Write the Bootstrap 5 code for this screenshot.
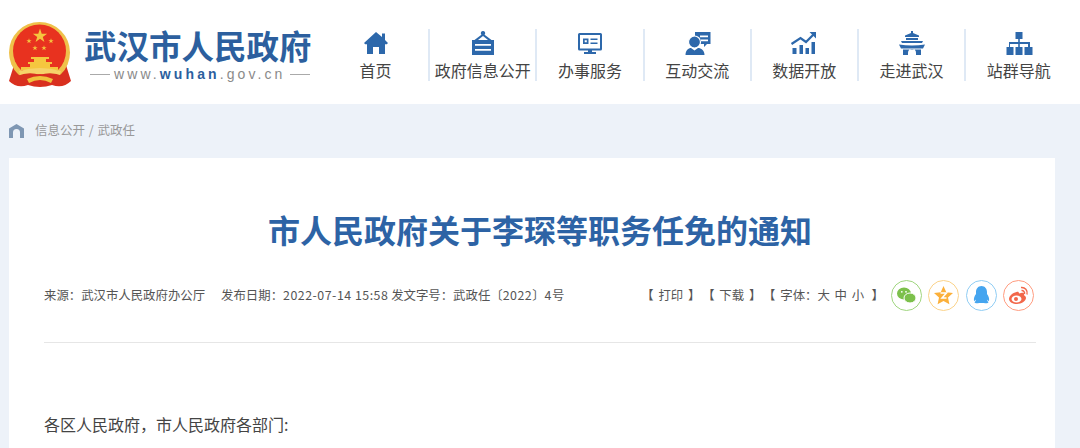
<!DOCTYPE html>
<html lang="zh">
<head>
<meta charset="utf-8">
<title>市人民政府关于李琛等职务任免的通知</title>
<link href="https://cdn.jsdelivr.net/npm/bootstrap@5.3.0/dist/css/bootstrap.min.css" rel="stylesheet">
<style>
html,body{height:448px;overflow:hidden}
body{background:#edf2f9;font-family:"Liberation Sans","Noto Sans CJK SC",sans-serif;color:#444}
.site-head{height:104px;background:#fff;padding-left:9px}
.brand-wrap{width:313px;height:104px}
.emblem{width:62px;height:67px;margin-top:21px;flex:none}
.brand-text{margin-left:13px;margin-top:24px}
.brand-name{font:700 32.5px/42px "Noto Sans CJK SC",sans-serif;color:#2c5f9e;white-space:nowrap}
.brand-url{display:flex;align-items:center;justify-content:center;gap:4px;font:400 14px/16px "Liberation Sans",sans-serif;letter-spacing:3.1px;color:#8a8a8a;margin-left:4px;white-space:nowrap}
.brand-url b{color:#2c5f9e;font-weight:700}
.brand-url i{display:block;width:20px;height:1px;background:#aaa}
.mainnav{margin-left:1px;padding-top:29px}
.nav-cell{width:107.2px;height:52px;border-right:2px solid #dfe9f5;text-align:center;color:#444;font:400 16px/20px "Noto Sans CJK SC",sans-serif;white-space:nowrap;text-decoration:none;display:block}
.nav-cell:last-child{border-right-color:transparent}
.nav-cell svg{display:block;width:28px;height:26px;margin:0 auto 5px;fill:#2d68ab}
.crumbs{height:53px;padding-left:9px;font:400 12.5px/1 "Noto Sans CJK SC",sans-serif;color:#999;word-spacing:1px}
.crumbs svg{width:15px;height:14px;fill:#7f97b3;margin-right:11px}
.sheet{background:#fff;margin:1px 25px 0 9px;padding:0 19px 0 35px;height:300px}
.doc-title{font:700 32px/40px "Noto Sans CJK SC",sans-serif;color:#2d63a5;text-align:center;padding-top:51px;margin:0;box-sizing:content-box;height:40px}
.meta-row{height:63px;margin-top:31px;border-bottom:1px solid #e6e6e6;font:400 12.4px/18px "Noto Sans CJK SC",sans-serif;color:#555;white-space:nowrap}
.meta-text{padding-top:6px}
.meta-text .num{letter-spacing:.5px}
.tools{word-spacing:2px}
.tools span{margin-right:8px}
.tools span:last-child{margin-right:1px}
.share-set{margin-right:2px}
.share{width:31px;height:31px;border-radius:50%;border:1px solid;display:flex;align-items:center;justify-content:center;margin-left:6.3px;background:#fff}
.share svg{width:21px;height:21px}
.s-green{border-color:#a0d67f}.s-gold{border-color:#fbd38a}.s-blue{border-color:#90cdf4}.s-red{border-color:#ff9c7f}
.greeting{font:400 16px/24px "Noto Sans CJK SC",sans-serif;color:#444;margin:69px 0 0}
</style>
</head>
<body>
<header class="site-head d-flex">
  <div class="brand-wrap d-flex">
    <svg class="emblem" viewBox="0 0 62 67">
      <defs><path id="st" d="M0-1 .23-.31H.95L.37.12 .59.81 0 .38-.59.81-.37.12-.95-.31H-.23z"/></defs>
      <path d="M5 44 L0 60 Q8 68 19 64 Q31 68 43 64 Q54 68 62 60 L57 44Z" fill="#d9301f"/>
      <circle cx="30.500" cy="31.500" r="30.500" fill="#efc14a"/>
      <circle cx="30.500" cy="30" r="26.500" fill="#e8321f"/>
      <g fill="#f5c63f">
        <use href="#st" transform="translate(31 15) scale(7.500)"/>
        <use href="#st" transform="translate(20 20) scale(2.800)"/>
        <use href="#st" transform="translate(42 20) scale(2.800)"/>
        <use href="#st" transform="translate(26 27) scale(2.800)"/>
        <use href="#st" transform="translate(35 27) scale(2.800)"/>
        <path d="M22 36H40V38H37V41H25V38H22zM19 41H43V43H41V46H21V43H19z"/>
        <path d="M12 46h37v3H12z"/>
      </g>
      <path d="M10 50Q31 44 52 50L50 56Q31 50 12 56Z" fill="#f6d36a"/>
      <path d="M8 55Q20 50 31 54Q42 50 54 55L53 64Q42 60 31 65Q20 60 9 64Z" fill="#d9301f"/>
      <path d="M18 58Q31 52 44 58L42 62Q31 56 20 62Z" fill="#f0c23d"/>
    </svg>
    <div class="brand-text">
      <div class="brand-name">武汉市人民政府</div>
      <div class="brand-url"><i></i><span>www.<b>wuhan</b>.gov.cn</span><i></i></div>
    </div>
  </div>
  <nav class="mainnav d-flex">
    <a class="nav-cell" href="#"><svg viewBox="0 0 28 26"><path d="M14 3 20 8V4.500h3v6.500l3 3-1.200 1.300H23V25h-6v-7h-6v7H5v-9.700H3.200L2 14z"/></svg>首页</a>
    <a class="nav-cell" href="#"><svg viewBox="0 0 28 26"><path fill-rule="evenodd" d="M14 2a2.200 2.200 0 0 1 1.600 3.700L22.500 11H25V26H3V11h2.500l6.900-5.300A2.200 2.200 0 0 1 14 2zM14 7 9 11H19zM6 15v1.800H22V15zM6 20v1.800H22V20z"/></svg>政府信息公开</a>
    <a class="nav-cell" href="#"><svg viewBox="0 0 28 26"><path fill-rule="evenodd" d="M3.500 4H24.500A1.500 1.500 0 0 1 26 5.500V20a1.500 1.500 0 0 1-1.500 1.500H16V23h4v2H8V23h4V21.500H3.500A1.500 1.500 0 0 1 2 20V5.500A1.500 1.500 0 0 1 3.500 4zM4 6V19.500H24V6zM7 9.500h5.500V15H7zM8.700 11.200v2H10.800v-2zM14.500 9.500H21.500V11H14.500zM14.500 13.500H21.500V15H14.500z"/></svg>办事服务</a>
    <a class="nav-cell" href="#"><svg viewBox="0 0 28 26"><path fill-rule="evenodd" d="M12 3H27.500V15H24l-3 3V15H16V10H12zM17 6.500v1.700h8V6.500zM18 10.500v1.700h7V10.500z"/><circle cx="11.500" cy="13" r="6" stroke="#fff" stroke-width="1.200"/><path d="M2.500 26c0-4.500 3-7 5.500-7l3.500 2.500L15 19c3 0 6.500 2.500 6.500 7z"/></svg>互动交流</a>
    <a class="nav-cell" href="#"><svg viewBox="0 0 28 26"><path d="M2.500 19h4v6h-4zM9.500 16H13v9H9.500zM15.500 19H19v6h-3.500zM21.500 13H25v12h-3.500z"/><path d="M1.500 15 10.500 9l5.500 4 8-8" fill="none" stroke="#2d68ab" stroke-width="2.200"/><path d="M19.500 3H26V9.500z"/></svg>数据开放</a>
    <a class="nav-cell" href="#"><svg viewBox="0 0 28 26"><path d="M13 2h2v2l6 2.500V8H7V6.500L13 4zM8 9h12v2H8zM3 12H25l-1 2H4zM1 15.500q13 2 26 0L25 19.500H3zM5 20.500H23V26H18V24a4 4 0 0 0-8 0v2H5z"/></svg>走进武汉</a>
    <a class="nav-cell" href="#"><svg viewBox="0 0 28 26"><path d="M10.500 3h7v7h-2.700v3H25v5h2.500v8h-8v-8H23v-3H14.800v3h2.700v8h-7v-8h2.700v-3H5v3h3.500v8h-7v-8H4v-5h9.200V10h-2.700z"/></svg>站群导航</a>
  </nav>
</header>

<div class="crumbs d-flex align-items-center">
  <svg viewBox="0 0 15 14"><path d="M7.500 0 15 4.500V14H11V8.500a3.500 3.500 0 0 0-7 0V14H0V4.500z"/></svg>
  <span>信息公开 / 武政任</span>
</div>

<main class="sheet">
  <h1 class="doc-title">市人民政府关于李琛等职务任免的通知</h1>
  <div class="meta-row d-flex justify-content-between align-items-start">
    <div class="meta-text"><span>来源：武汉市人民政府办公厅</span><span class="ms-3">发布日期：<span class="num">2022-07-14 15:58</span></span> <span>发文字号：武政任〔<span class="num">2022</span>〕<span class="num">4</span>号</span></div>
    <div class="d-flex align-items-start share-set">
      <div class="tools meta-text"><span>【 打印 】</span><span>【 下载 】</span><span>【 字体：大&nbsp;中&nbsp;小&nbsp;&#8201;】</span></div>
      <div class="share s-green"><svg viewBox="0 0 21 21"><ellipse cx="8" cy="8.500" rx="7" ry="6" fill="#7cc04b"/><ellipse cx="14" cy="13" rx="6" ry="5" fill="#7cc04b" stroke="#fff"/><circle cx="5.800" cy="6.800" r=".9" fill="#fff"/><circle cx="10" cy="6.800" r=".9" fill="#fff"/></svg></div>
      <div class="share s-gold"><svg viewBox="0 0 21 21"><path d="M10.500 1l2.800 6.300 6.700.7-5 4.600 1.400 6.700-5.900-3.400-5.900 3.400 1.400-6.700-5-4.600 6.700-.7z" fill="#fbb03b"/><path d="M7.500 8h6l-4.500 5h4.500" fill="none" stroke="#fff" stroke-width="1.500"/></svg></div>
      <div class="share s-blue"><svg viewBox="0 0 21 21"><path d="M10.500 1c3.500 0 5.500 3 5.500 6v2c1.500 2 2.500 4 2 7-1 0-1.500-1-2-1.500 0 1 .5 2 1.500 2.500 0 1.500-3 1.500-4.500 1H8c-1.500.5-4.500.500-4.500-1 1-.5 1.500-1.500 1.500-2.500-.5.500-1 1.500-2 1.500-.5-3 .5-5 2-7V7c0-3 2-6 5.500-6z" fill="#45a5ef"/></svg></div>
      <div class="share s-red"><svg viewBox="0 0 21 21"><path d="M8.500 7C4.500 8 1 11 1 14c0 3 4 5 8 5s9-3 9-6c0-2-2-2.500-2-3 .5-1.500 0-3-3-2l-2 .5c0-1.500-1-2-2.500-1.500z" fill="#f2674a"/><ellipse cx="8.500" cy="14" rx="5" ry="3.500" fill="#fff"/><circle cx="8" cy="14" r="2" fill="#f2674a"/><path d="M13 2.500c4-.5 7 3 6 7M13.500 5.500c2-.2 3.500 1.500 3 3.500" fill="none" stroke="#f2674a" stroke-width="1.400"/></svg></div>
    </div>
  </div>
  <p class="greeting">各区人民政府，市人民政府各部门:</p>
</main>
<script src="https://cdn.jsdelivr.net/npm/bootstrap@5.3.0/dist/js/bootstrap.bundle.min.js"></script>
</body>
</html>
